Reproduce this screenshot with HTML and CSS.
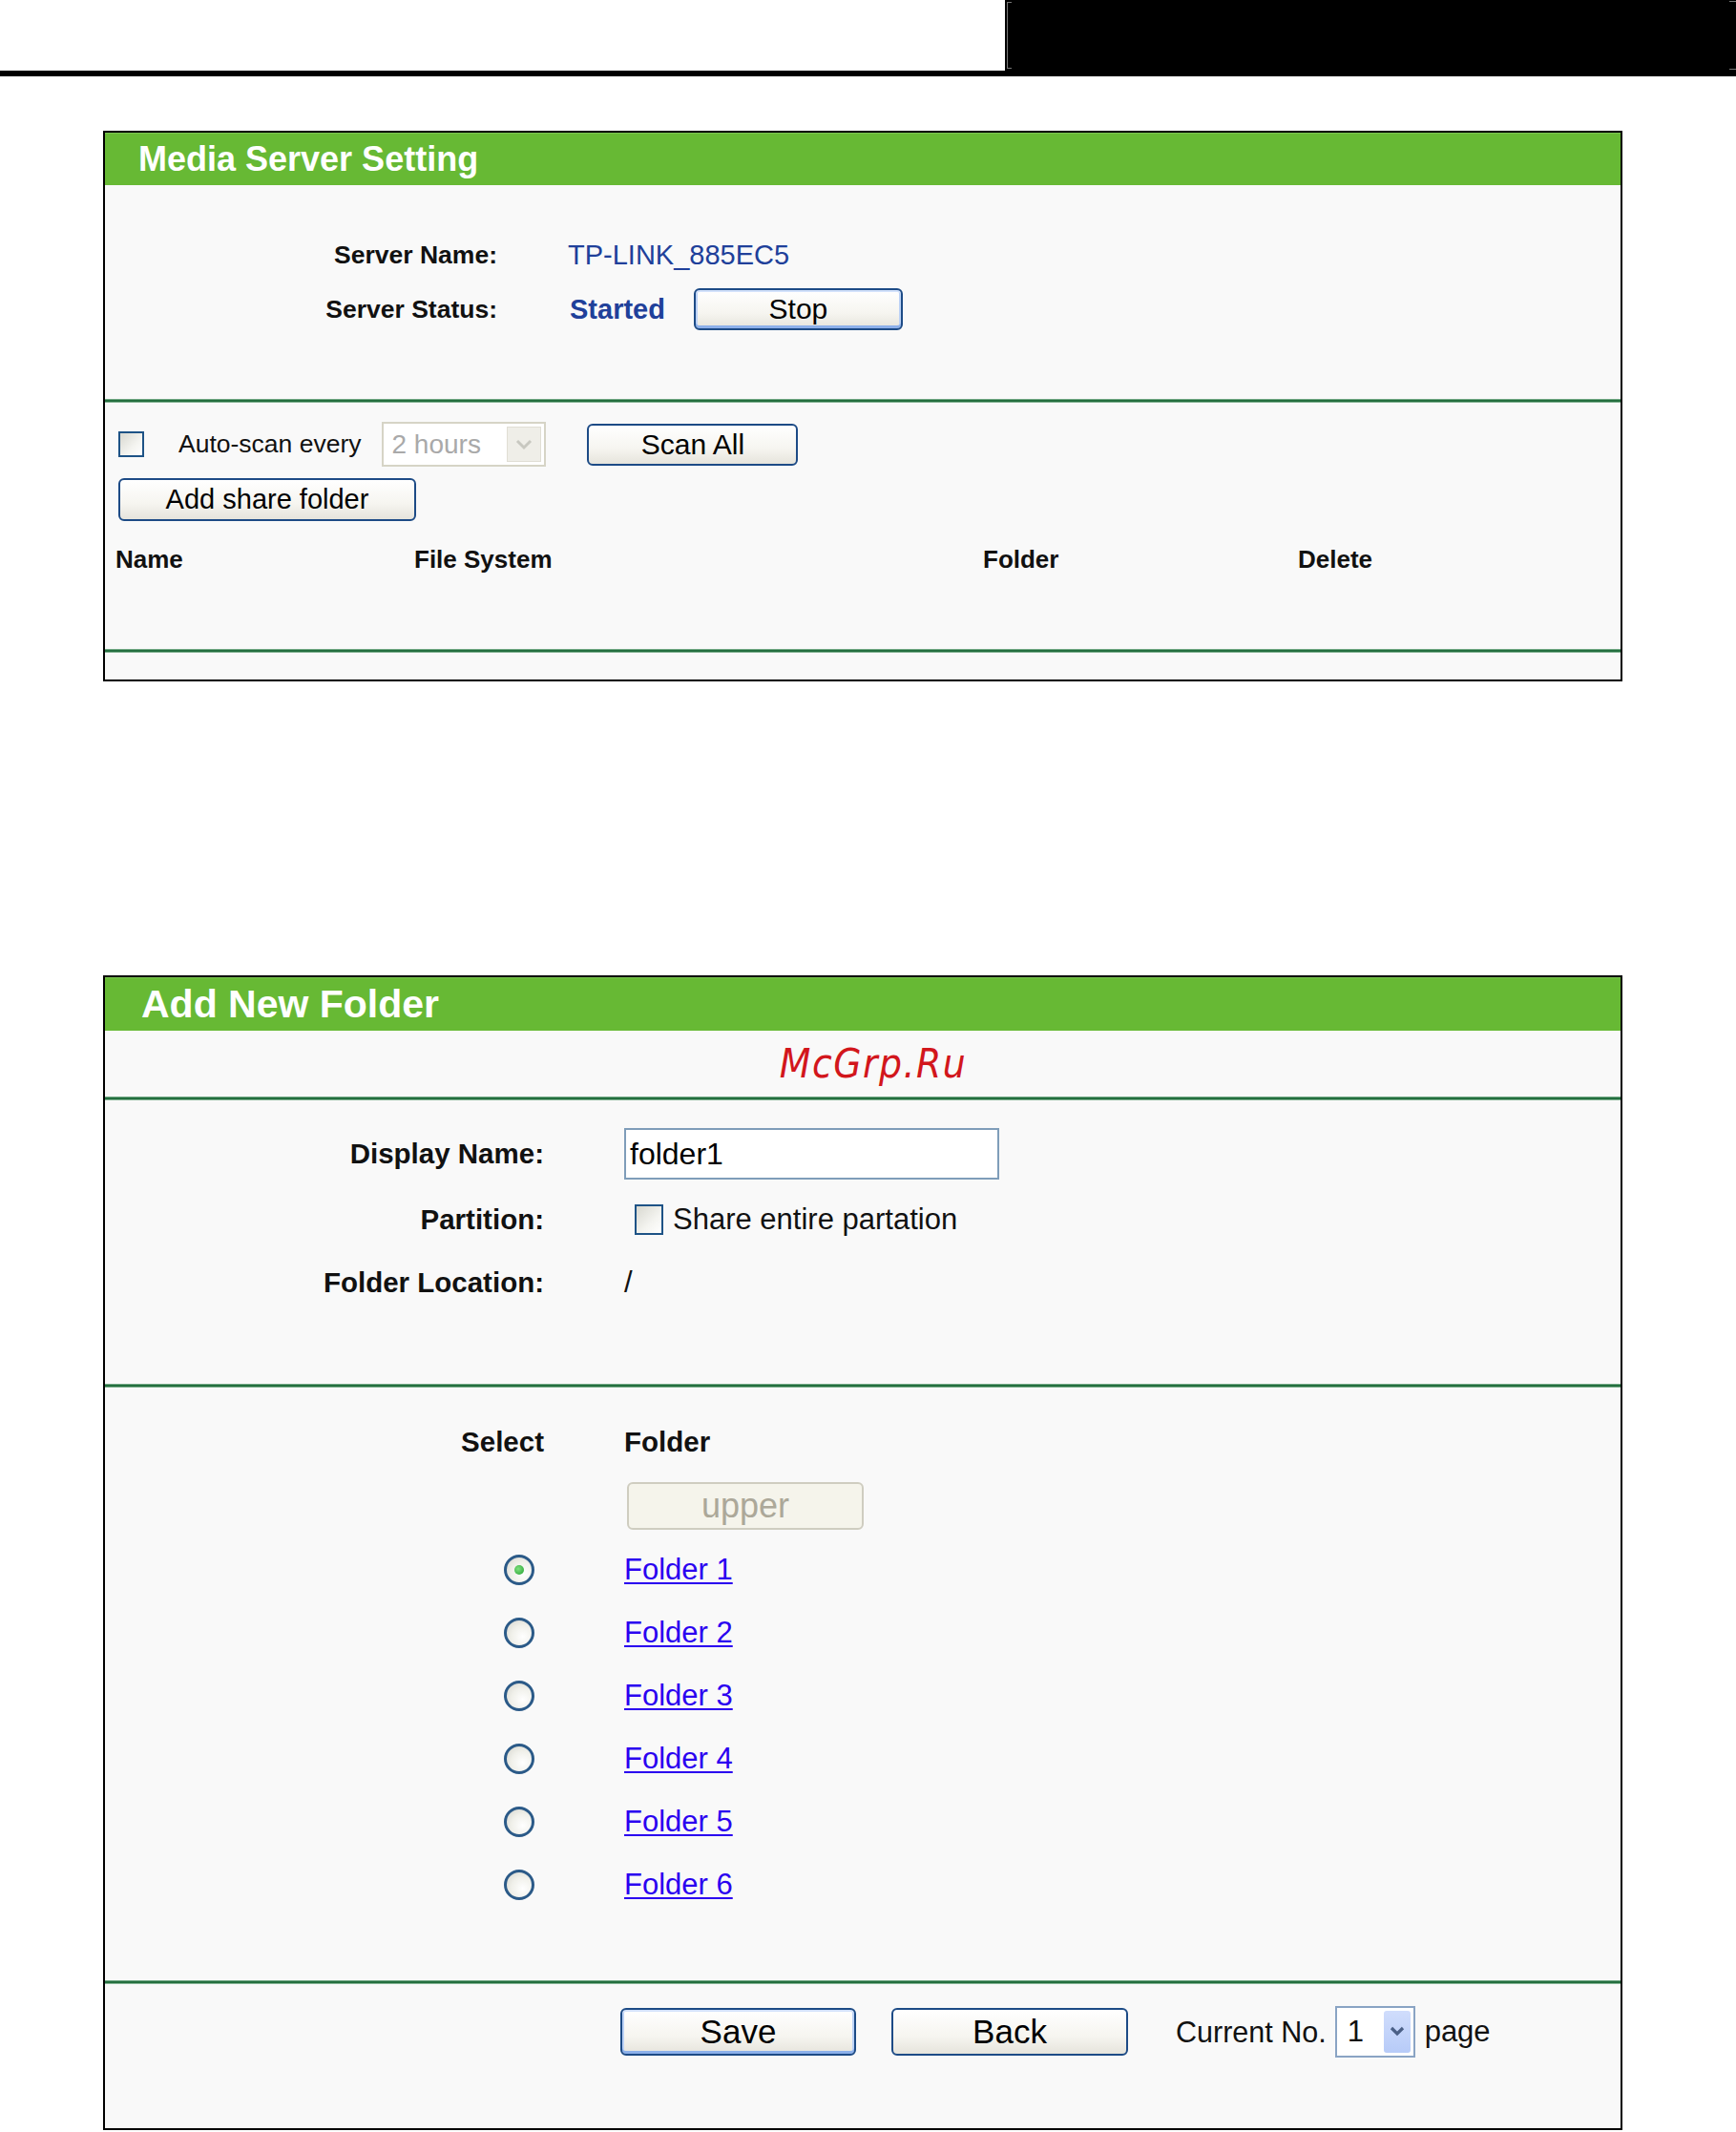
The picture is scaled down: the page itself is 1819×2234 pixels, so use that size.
FILE: index.html
```html
<!DOCTYPE html>
<html>
<head>
<meta charset="utf-8">
<title>Media Server Setting</title>
<link rel="stylesheet" href="styles.css">
</head>
<body>
<div class="topbar">
  <div class="top-white"></div>
  <div class="top-black"><span class="tick-l"></span><span class="tick-r"></span></div>
</div>
<div class="topline"></div>

<div class="panel panel-media">
  <div class="head head-media">Media Server Setting</div>
  <div class="sec sec-status">
    <div class="lbl">Server Name:</div>
    <div class="val">TP-LINK_885EC5</div>
    <div class="lbl">Server Status:</div>
    <div class="val val-row"><span>Started</span><button class="btn btn-focus btn-stop">Stop</button></div>
  </div>
  <div class="gline"></div>
  <div class="sec sec-share">
    <div class="scan-row">
      <span class="chk chk-scan"></span>
      <span class="scan-txt">Auto-scan every</span>
      <span class="sel-dis"><span class="sel-dis-txt">2 hours</span><span class="sel-dis-arrow"><svg width="20" height="14" viewBox="0 0 20 14"><path d="M3 3 L10 10 L17 3" fill="none" stroke="#c8c8c0" stroke-width="3"/></svg></span></span>
      <button class="btn btn-scan">Scan All</button>
    </div>
    <div class="add-row"><button class="btn btn-add">Add share folder</button></div>
    <div class="cols">
      <span>Name</span><span>File System</span><span>Folder</span><span>Delete</span>
    </div>
  </div>
  <div class="gline"></div>
  <div class="sec-tail"></div>
</div>

<div class="panel panel-add">
  <div class="head head-add">Add New Folder</div>
  <div class="mark">McGrp.Ru</div>
  <div class="gline"></div>
  <div class="sec sec-form">
    <div class="lbl2 r-input">Display Name:</div>
    <div class="r-input"><span class="inp">folder1</span></div>
    <div class="lbl2">Partition:</div>
    <div class="val2"><span class="chk chk-part"></span><span>Share entire partation</span></div>
    <div class="lbl2">Folder Location:</div>
    <div class="val2">/</div>
  </div>
  <div class="gline"></div>
  <div class="sec sec-folders">
    <div class="lbl2">Select</div>
    <div class="lbl2 left">Folder</div>
    <div></div>
    <div class="r-upper"><span class="btn-upper">upper</span></div>
    <div class="radio-cell"><span class="radio on"></span></div><div class="val2"><a href="#" class="lnk">Folder 1</a></div>
    <div class="radio-cell"><span class="radio"></span></div><div class="val2"><a href="#" class="lnk">Folder 2</a></div>
    <div class="radio-cell"><span class="radio"></span></div><div class="val2"><a href="#" class="lnk">Folder 3</a></div>
    <div class="radio-cell"><span class="radio"></span></div><div class="val2"><a href="#" class="lnk">Folder 4</a></div>
    <div class="radio-cell"><span class="radio"></span></div><div class="val2"><a href="#" class="lnk">Folder 5</a></div>
    <div class="radio-cell"><span class="radio"></span></div><div class="val2"><a href="#" class="lnk">Folder 6</a></div>
  </div>
  <div class="gline"></div>
  <div class="sec sec-foot">
    <button class="btn btn-big btn-focus">Save</button>
    <button class="btn btn-big btn-back">Back</button>
    <span class="cur">Current No.</span>
    <span class="pgsel"><span class="pgsel-txt">1</span><span class="pgsel-arrow"><svg width="18" height="12" viewBox="0 0 18 12"><path d="M3 2 L9 8 L15 2" fill="none" stroke="#4a5f86" stroke-width="3.2"/></svg></span></span>
    <span class="pg">page</span>
  </div>
</div>
</body>
</html>
```
FILE: styles.css
```css
* { box-sizing: border-box; }
html, body { margin: 0; padding: 0; background: #fff; }
body { font-family: "Liberation Sans", Arial, sans-serif; color: #000; width: 1819px; height: 2234px; overflow: hidden; }

.topbar { display: flex; height: 74px; }
.top-white { width: 1053px; background: #fff; }
.top-black { flex: 1; background: #000; position: relative; }
.tick-l { position: absolute; left: 2px; top: 2px; width: 5px; height: 70px; border: 1px solid #777; border-right: none; }
.tick-r { position: absolute; right: 0; top: 1px; width: 7px; height: 72px; border-top: 1px solid #777; border-bottom: 1px solid #777; }
.topline { height: 6px; background: #000; }

.panel { margin-left: 108px; width: 1592px; border: 2px solid #000; background: #f9f9f9; }
.panel-media { margin-top: 57px; }
.panel-add { margin-top: 308px; }

.head { background: #67b934; color: #fff; font-weight: bold; border-top: 1px solid #7cc552; }
.head-media { height: 55px; line-height: 54px; font-size: 36px; padding-left: 35px; }
.head-add { height: 56px; line-height: 55px; font-size: 41px; padding-left: 38px; }

.gline { height: 4px; background: linear-gradient(#a6cfb3, #246f3f 30%, #246f3f 65%, #b7d9c1); }

/* media server status */
.sec-status { display: grid; grid-template-columns: 411px auto; column-gap: 74px; row-gap: 13px; padding: 51px 0 72px 0; grid-auto-rows: 44px; align-items: center; }
.lbl { text-align: right; font-weight: bold; font-size: 26.5px; line-height: 44px; color: #111; }
.val { font-size: 29px; line-height: 44px; color: #20409a; }
.val-row { display: flex; align-items: center; font-weight: bold; font-size: 29px; }
.val-row span { margin-left: 2px; }

.btn { font-family: "Liberation Sans", Arial, sans-serif; color: #000; border: 2px solid #1d4b86; border-radius: 6px; background: linear-gradient(#ffffff, #f6f5f0 60%, #e6e4dc); padding: 0; cursor: pointer; }
.btn-focus { box-shadow: inset 0 2px 0 #d3e2fb, inset 0 -3px 0 #8cb0ea, inset 2px 0 0 #bcd2f6, inset -2px 0 0 #bcd2f6; }
.btn-stop { width: 219px; height: 44px; font-size: 30px; margin-left: 30px; }

/* share folder */
.sec-share { padding: 20px 0 74px 0; }
.scan-row { display: flex; align-items: center; height: 47px; padding-left: 14px; }
.chk { display: inline-block; border: 2px solid #1e5386; background: linear-gradient(135deg, #d8d8d0, #f4f4f0 60%, #ffffff); }
.chk-scan { width: 27px; height: 27px; }
.scan-txt { font-size: 26.5px; margin-left: 36px; color: #111; }
.sel-dis { display: inline-flex; align-items: center; margin-left: 22px; width: 172px; height: 47px; border: 2px solid #d6d4c6; background: #fff; padding: 3px; }
.sel-dis-txt { flex: 1; font-size: 28px; color: #a9a9a9; padding-left: 5px; }
.sel-dis-arrow { width: 36px; height: 100%; background: #efeee8; border: 1px solid #e0ded4; display: flex; align-items: center; justify-content: center; }
.btn-scan { width: 221px; height: 44px; font-size: 30px; margin-left: 43px; }
.add-row { margin-top: 12px; padding-left: 14px; }
.btn-add { width: 312px; height: 45px; font-size: 29px; }
.cols { display: grid; grid-template-columns: 313px 596px 330px auto; margin-top: 20px; padding-left: 11px; font-weight: bold; font-size: 26px; line-height: 40px; color: #111; }
.sec-tail { height: 28px; }

/* add new folder */
.mark { height: 69px; line-height: 69px; text-align: center; padding-left: 22px; font-family: "DejaVu Sans Condensed", "DejaVu Sans", sans-serif; font-style: italic; font-size: 42px; color: #d2161c; letter-spacing: 1.5px; }
.sec-form { display: grid; grid-template-columns: 460px auto; column-gap: 84px; row-gap: 18px; padding: 29px 0 82px 0; grid-template-rows: 54px 48px 48px; align-items: center; }
.lbl2 { text-align: right; font-weight: bold; font-size: 29.5px; line-height: 48px; color: #111; }
.lbl2.left { text-align: left; }
.val2 { font-size: 31px; line-height: 48px; display: flex; align-items: center; color: #111; }
.inp { display: flex; align-items: center; width: 393px; height: 54px; border: 2px solid #7f9db9; background: #fff; font-size: 32px; padding-left: 4px; }
.chk-part { width: 30px; height: 32px; margin-left: 11px; margin-right: 10px; }

.sec-folders { display: grid; grid-template-columns: 460px auto; column-gap: 84px; row-gap: 18px; padding: 33px 0 76px 0; grid-template-rows: 48px 50px repeat(6, 48px); align-items: center; }
.r-upper { padding-left: 3px; }
.btn-upper { display: flex; align-items: center; justify-content: center; width: 248px; height: 50px; border: 2px solid #cfcdc0; border-radius: 6px; background: #f5f4eb; color: #aca899; font-size: 36px; }
.radio-cell { display: flex; justify-content: flex-end; padding-right: 10px; }
.radio { display: inline-block; width: 32px; height: 32px; border-radius: 50%; border: 3px solid #2b5a88; background: radial-gradient(circle at 65% 65%, #ffffff, #f0f0ea 50%, #d4d4cc); position: relative; }
.radio.on::after { content: ""; position: absolute; left: 8px; top: 8px; width: 10px; height: 10px; border-radius: 50%; background: radial-gradient(circle at 40% 40%, #7fe07f, #22a02e); }
.lnk { color: #2a00f0; text-decoration: underline; text-underline-offset: 3px; text-decoration-thickness: 2px; font-size: 31px; }

.sec-foot { display: flex; align-items: center; padding: 23px 0 74px 540px; }
.btn-big { width: 247px; height: 50px; font-size: 35px; }
.btn-back { margin-left: 37px; width: 248px; }
.cur { margin-left: 50px; font-size: 30.5px; color: #111; }
.pgsel { display: inline-flex; align-items: center; margin-left: 9px; width: 84px; height: 54px; border: 2px solid #8aa4c4; background: #fff; padding: 3px; }
.pgsel-txt { flex: 1; font-size: 31px; padding-left: 8px; color: #111; }
.pgsel-arrow { width: 28px; height: 100%; background: linear-gradient(#d0ddfc, #b7cbf8); border-radius: 3px; display: flex; align-items: center; justify-content: center; }
.pg { margin-left: 10px; font-size: 31px; color: #111; }
```
